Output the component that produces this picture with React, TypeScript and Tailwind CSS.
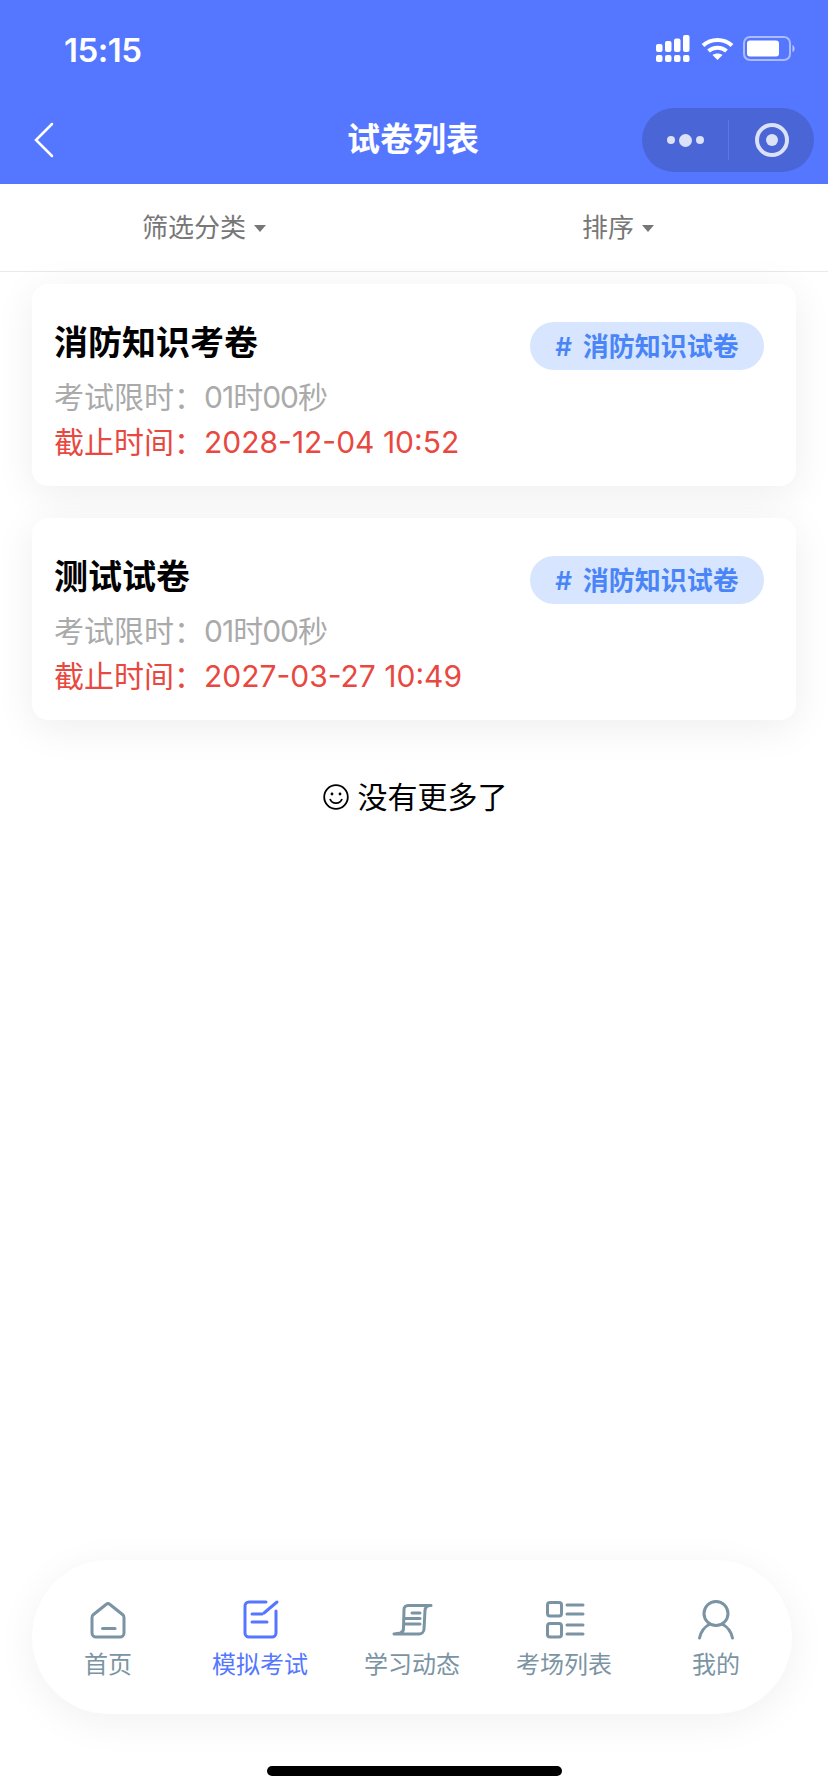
import React from "react";

const FONT = "font-['Inter','Noto_Sans_CJK_SC',sans-serif]";

const papers = [
  { title: "消防知识考卷", deadline: "2028-12-04 10:52" },
  { title: "测试试卷", deadline: "2027-03-27 10:49" },
];

const StatusIcons = () => (
  <div className="flex items-center">
    <svg width="34" height="28" viewBox="0 0 34 28" fill="#fff">
      <rect x="0" y="9" width="6.5" height="8" rx="2" />
      <rect x="9" y="6" width="6.5" height="11" rx="2" />
      <rect x="18" y="3.5" width="6.5" height="13.5" rx="2" />
      <rect x="27" y="0" width="6.5" height="17" rx="2" />
      <rect x="0" y="20" width="6.5" height="7" rx="2" />
      <rect x="9" y="20" width="6.5" height="7" rx="2" />
      <rect x="18" y="20" width="6.5" height="7" rx="2" />
      <rect x="27" y="20" width="6.5" height="7" rx="2" />
    </svg>
    <svg className="ml-[11px]" width="33" height="26" viewBox="0 0 33 26" fill="none" stroke="#fff" strokeWidth="4">
      <path d="M2 9.5 C10 2 23 2 31 9.5" />
      <path d="M7.5 15 C12.5 10.500 20.500 10.500 25.500 15" />
      <path d="M16.500 24 L11.500 19 C14.500 17 18.500 17 21.500 19 Z" fill="#fff" stroke="none" />
    </svg>
    <svg className="ml-[9px]" width="53" height="26" viewBox="0 0 53 26" fill="none">
      <rect x="1" y="1" width="46" height="23" rx="6" stroke="#fff" strokeOpacity="0.5" strokeWidth="2" />
      <rect x="4" y="4.500" width="32" height="16" rx="3" fill="#fff" />
      <path d="M49.500 9 C52 10 52.500 15 49.500 16 Z" fill="#fff" fillOpacity="0.6" />
    </svg>
  </div>
);

const Capsule = () => (
  <div className="flex h-16 w-[172px] items-center rounded-[32px] bg-[#4a66d6]">
    <div className="flex w-[86px] items-center justify-center gap-[4px] pl-[1px]">
      <span className="h-2 w-2 rounded-full bg-[#dbe1f7]" />
      <span className="h-[13px] w-[13px] rounded-full bg-[#dbe1f7]" />
      <span className="h-2 w-2 rounded-full bg-[#dbe1f7]" />
    </div>
    <div className="h-10 w-px bg-[#5d78e2]" />
    <div className="flex flex-1 items-center justify-center">
      <div className="flex h-[34px] w-[34px] items-center justify-center rounded-full border-[4px] border-[#dbe1f7]">
        <span className="h-3 w-3 rounded-full bg-[#dbe1f7]" />
      </div>
    </div>
  </div>
);

const Caret = () => <span className="ml-2 mt-[2px] h-0 w-0 border-x-[6px] border-t-[7px] border-x-transparent border-t-[#777]" />;

const PaperCard = ({ title, deadline }: { title: string; deadline: string }) => (
  <div className="flex h-[202px] items-start justify-between rounded-2xl bg-white pl-[22px] pr-8 pt-[35px] shadow-[0_8px_40px_rgba(0,0,0,0.07)]">
    <div>
      <div className="text-[34px] font-bold leading-[48px] text-black">{title}</div>
      <div className="mt-[8px] text-[30px] leading-[45px] text-[#aaaaaa]">
        考试限时：<span className="tracking-[-1px]">01时00秒</span>
      </div>
      <div className="text-[30px] leading-[45px] text-[#e8483f]">截止时间：{deadline}</div>
    </div>
    <div className="mt-[3px] flex h-12 w-[234px] items-center justify-center rounded-full bg-[#d7e5ff] text-[26px] font-semibold text-[#4a85f8]">
      #<span className="ml-[11px]">消防知识试卷</span>
    </div>
  </div>
);

const tabs: { label: string; active?: boolean; icon: React.ReactNode }[] = [
  {
    label: "首页",
    icon: (
      <>
        <path d="M22 8.500 a3 3 0 0 1 4 0 L38.500 18.500 a4 4 0 0 1 1.500 3 V37 a4 4 0 0 1 -4 4 H12 a4 4 0 0 1 -4 -4 V21.500 a4 4 0 0 1 1.500 -3 Z" />
        <path d="M18.500 32.500 H31" />
      </>
    ),
  },
  {
    label: "模拟考试",
    active: true,
    icon: (
      <>
        <path d="M30 6 H13 a4 4 0 0 0 -4 4 V37 a4 4 0 0 0 4 4 H36 a4 4 0 0 0 4 -4 V15" />
        <path d="M28 17 L41 6" />
        <path d="M16 18 H26" />
        <path d="M16 26 H31" />
      </>
    ),
  },
  {
    label: "学习动态",
    icon: (
      <>
        <path d="M43 9.500 H20 a4 4 0 0 0 -4 4 L15.500 32 a5 5 0 0 1 -3 5 L6 38 H31 a5 5 0 0 0 5 -5 L37 14.500 a5 5 0 0 1 6 -5" />
        <path d="M24 17 H32" />
        <path d="M17.500 22.500 H32" />
        <path d="M17.500 28 H32" />
      </>
    ),
  },
  {
    label: "考场列表",
    icon: (
      <>
        <rect x="7.500" y="6.500" width="14" height="13.500" rx="2.500" />
        <rect x="7.500" y="27.500" width="14" height="13.500" rx="2.500" />
        <path d="M27 9 H43" />
        <path d="M27 18 H43" />
        <path d="M27 29 H43" />
        <path d="M27 38 H43" />
      </>
    ),
  },
  {
    label: "我的",
    icon: (
      <>
        <circle cx="24" cy="17.500" r="12" />
        <path d="M7.500 42 C9 35 14 30 18 28 M30 28 C34 30 39 35 40.500 42" />
      </>
    ),
  },
];

export default function App() {
  return (
    <div className={`flex h-[1792px] w-[828px] flex-col overflow-hidden bg-white ${FONT}`}>
      <header className="h-[184px] bg-[#5577ff] text-white">
        <div className="flex h-[92px] items-start justify-between pl-16 pr-[32px] pt-[35px]">
          <span className="text-[33px] font-semibold leading-[30px] tracking-[-0.5px]">15:15</span>
          <StatusIcons />
        </div>
        <div className="grid h-[92px] grid-cols-[1fr_auto_1fr] items-center pt-1 pl-[14px] pr-[14px]">
          <svg className="ml-[20px]" width="20" height="36" viewBox="0 0 20 36" fill="none" stroke="#fff" strokeWidth="2.500" strokeLinecap="round">
            <path d="M18 2 L2 18 L18 34" />
          </svg>
          <div className="-ml-[2px] text-[33px] font-semibold">试卷列表</div>
          <div className="justify-self-end">
            <Capsule />
          </div>
        </div>
      </header>

      <div className="flex h-[88px] border-b border-[#e9e9e9] bg-white text-[26px] text-[#777]">
        <div className="flex w-[408px] items-center justify-center">
          筛选分类
          <Caret />
        </div>
        <div className="flex w-[420px] items-center justify-center">
          排序
          <Caret />
        </div>
      </div>

      <main className="flex flex-1 flex-col gap-8 px-8 pt-3">
        {papers.map((p) => (
          <PaperCard key={p.title} title={p.title} deadline={p.deadline} />
        ))}
        <div className="ml-[2px] mt-[19px] flex items-center justify-center gap-[9px] text-[30px] leading-[52px] text-black">
          <svg width="26" height="26" viewBox="0 0 26 26" fill="none" stroke="#000" strokeWidth="1.800">
            <circle cx="13" cy="13" r="11.800" />
            <path d="M7 15 C9 20.500 17 20.500 19 15" />
            <circle cx="9" cy="10" r="1.400" fill="#000" stroke="none" />
            <circle cx="17" cy="10" r="1.400" fill="#000" stroke="none" />
          </svg>
          没有更多了
        </div>
      </main>

      <nav className="mx-8 mb-[52px] grid h-[154px] w-[760px] grid-cols-5 rounded-[77px] bg-white pt-9 shadow-[0_8px_40px_rgba(0,0,0,0.06)]">
        {tabs.map((t) => (
          <div key={t.label} className={`flex flex-col items-center ${t.active ? "text-[#5577ff]" : "text-[#7b94a3]"}`}>
            <svg width="48" height="48" viewBox="0 0 48 48" fill="none" stroke="currentColor" strokeWidth="3" strokeLinecap="round" strokeLinejoin="round">
              {t.icon}
            </svg>
            <span className="text-2xl leading-[42px]">{t.label}</span>
          </div>
        ))}
      </nav>

      <div className="mb-4 ml-[267px] h-[10px] w-[295px] rounded-full bg-black" />
    </div>
  );
}
